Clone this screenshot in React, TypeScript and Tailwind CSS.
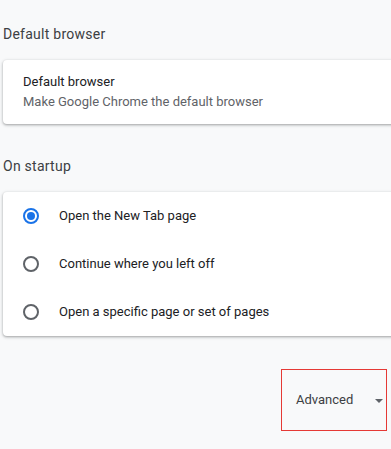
const options = [
  { label: "Open the New Tab page", checked: true },
  { label: "Continue where you left off", checked: false },
  { label: "Open a specific page or set of pages", checked: false },
];

function Radio({ checked }: { checked: boolean }) {
  return checked ? (
    <span className="flex h-4 w-4 items-center justify-center rounded-full border-2 border-[#1a73e8]">
      <span className="h-2 w-2 rounded-full bg-[#1a73e8]" />
    </span>
  ) : (
    <span className="h-4 w-4 rounded-full border-2 border-[#5f6368]" />
  );
}

export default function App() {
  return (
    <div className="min-h-screen overflow-hidden bg-[#f8f9fa] font-['Roboto',sans-serif] text-[13px] text-[#202124]">
      <div className="pl-[3px] pt-[24px]">
        <h2 className="text-[14px] leading-5 tracking-[0.25px] text-[#3c4043]">Default browser</h2>
        <div className="mt-4 w-[420px] rounded shadow-[0_1px_2px_rgba(60,64,67,0.3),0_1px_3px_1px_rgba(60,64,67,0.15)] bg-white py-3 pl-5">
          <div className="leading-5">Default browser</div>
          <div className="leading-5 text-[#5f6368]">Make Google Chrome the default browser</div>
        </div>

        <h2 className="mt-8 text-[14px] leading-5 tracking-[0.25px] text-[#3c4043]">On startup</h2>
        <div className="mt-4 w-[420px] rounded bg-white shadow-[0_1px_2px_rgba(60,64,67,0.3),0_1px_3px_1px_rgba(60,64,67,0.15)]">
          {options.map((o) => (
            <div key={o.label} className="flex h-12 items-center pl-5">
              <Radio checked={o.checked} />
              <span className="ml-5 leading-5">{o.label}</span>
            </div>
          ))}
        </div>

        <div className="mt-[33px] flex justify-end pr-[4px]">
          <div className="flex h-[62px] w-[106px] items-center border border-[#e53935] pl-[14px] pr-[3px]">
            <span className="flex-1 leading-5 text-[#3c4043]">Advanced</span>
            <svg width="8" height="4" viewBox="0 0 8 4" className="mt-px">
              <path d="M0 0 L8 0 L4 4 Z" fill="#5f6368" />
            </svg>
          </div>
        </div>
      </div>
    </div>
  );
}
